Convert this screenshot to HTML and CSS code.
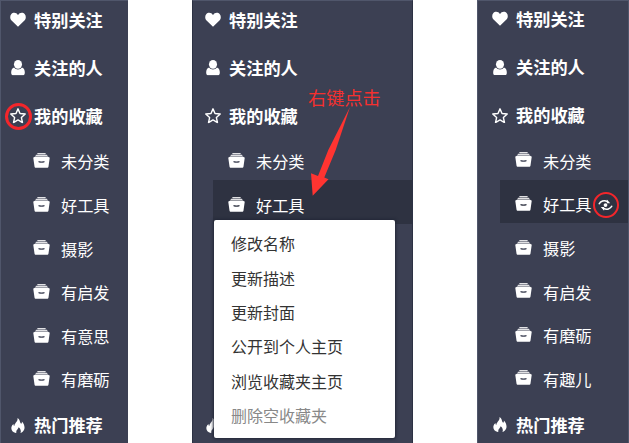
FILE: index.html
```html
<!DOCTYPE html>
<html lang="zh-CN">
<head>
<meta charset="utf-8">
<title>收藏夹</title>
<link rel="stylesheet" href="styles.css">
</head>
<body>
<svg class="defs" width="0" height="0" aria-hidden="true">
  <symbol id="heart" viewBox="0 0 16 15"><path d="M8 14.5 1.3 8C-.2 6.3-.1 3.500 1.200 2 3-.1 6.400.1 8 2.900 9.600.1 13-.1 14.800 2c1.300 1.500 1.400 4.300-.1 6z"/></symbol>
  <symbol id="user" viewBox="0 0 14 15"><ellipse cx="7" cy="4.200" rx="3.900" ry="4.200"/><path d="M3.200 7.300C1 8 .4 10 .4 12.300c0 1.600.8 2.500 2.200 2.500h8.800c1.400 0 2.200-.9 2.200-2.500 0-2.300-.6-4.300-2.800-5C9.200 9.800 4.800 9.800 3.200 7.300z"/></symbol>
  <symbol id="star" viewBox="0.700 0.700 14.600 14.600"><path d="m8 1.500 1.900 4.400 4.900.5-3.600 3.300 1 4.700L8 12l-4.200 2.400 1-4.700L1.200 6.400l4.900-.5z" fill="none" stroke="currentColor" stroke-width="1.350" stroke-linejoin="round"/></symbol>
  <symbol id="fire" viewBox="0 0 14 15"><path d="M6.500 0c3 2 1.700 4.200 3.700 5.500.6-.5.700-1.300.5-2.100 2.800 2.600 3.800 7.400.8 10-.7.600-1.500 1-2.200 1.200 1-2.100.2-4.200-1.700-5.700-.1 1.800-2.900 2.500-2.200 5.700C1.500 14 .1 11.400.7 8.800c.3-1.300 1-2.200 1.900-3 0 1 .2 1.700.8 2.200C3.300 4.600 7.200 3.800 6.500 0z"/></symbol>
  <symbol id="box" viewBox="0 0 17 15"><path d="M4.800.6h7.400M3.200 2.400h10.600" fill="none" stroke="currentColor" stroke-width="1.200" stroke-linecap="round" opacity=".85"/><path fill-rule="evenodd" d="M2.300 3.600h12.400L16 4.300c.6 0 .8.300.7.800l-1.200 8.300c-.1.900-.6 1.300-1.400 1.300H2.900c-.8 0-1.300-.4-1.400-1.300L.3 5.100c-.1-.5.1-.8.700-.8zM5.500 8v1.200c1.800.8 4.200.8 6 0V8c-1.800.6-4.200.6-6 0z"/></symbol>
  <symbol id="view" viewBox="0 0 16 12"><path d="M1 5.200C2.800 1.800 6.600.6 9.800 2.200M15 6.800c-1.800 3.400-5.600 4.600-8.800 3" fill="none" stroke="currentColor" stroke-width="1.700"/><path d="M9.500 0v4h3.500zM6.500 12V8H3z"/><circle cx="8" cy="6" r="2"/></symbol>
</svg>
<main class="shots">
  <nav class="panel panel-first">
    <div class="row"><svg class="icon"><use href="#heart"/></svg>特别关注</div>
    <div class="row"><svg class="icon"><use href="#user"/></svg>关注的人</div>
    <div class="row"><svg class="icon"><use href="#star"/></svg>我的收藏<span class="ring ring-star"></span></div>
    <div class="folders">
      <div class="folder"><svg class="box"><use href="#box"/></svg>未分类</div>
      <div class="folder"><svg class="box"><use href="#box"/></svg>好工具</div>
      <div class="folder"><svg class="box"><use href="#box"/></svg>摄影</div>
      <div class="folder"><svg class="box"><use href="#box"/></svg>有启发</div>
      <div class="folder"><svg class="box"><use href="#box"/></svg>有意思</div>
      <div class="folder"><svg class="box"><use href="#box"/></svg>有磨砺</div>
    </div>
    <div class="row"><svg class="icon"><use href="#fire"/></svg>热门推荐</div>
  </nav>
  <nav class="panel panel-second">
    <div class="row"><svg class="icon"><use href="#heart"/></svg>特别关注</div>
    <div class="row"><svg class="icon"><use href="#user"/></svg>关注的人</div>
    <div class="row"><svg class="icon"><use href="#star"/></svg>我的收藏</div>
    <div class="folders">
      <div class="folder"><svg class="box"><use href="#box"/></svg>未分类</div>
      <div class="folder active"><svg class="box"><use href="#box"/></svg>好工具
        <div class="menu">
          <div>修改名称</div>
          <div>更新描述</div>
          <div>更新封面</div>
          <div>公开到个人主页</div>
          <div>浏览收藏夹主页</div>
          <div class="disabled">删除空收藏夹</div>
        </div>
      </div>
      <div class="folder"></div>
      <div class="folder"></div>
      <div class="folder"></div>
      <div class="folder"></div>
    </div>
    <div class="row"><svg class="icon"><use href="#fire"/></svg></div>
    <span class="hint">右键点击</span>
    <svg class="arrow" viewBox="310 106 42 92"><path d="m350 107-14.300 43-11.400 27.500 4.200 1.800-15.800 16.500-1.700-22.500 7 2.700 10.300-26z"/></svg>
  </nav>
  <nav class="panel panel-third">
    <div class="row"><svg class="icon"><use href="#heart"/></svg>特别关注</div>
    <div class="row"><svg class="icon"><use href="#user"/></svg>关注的人</div>
    <div class="row"><svg class="icon"><use href="#star"/></svg>我的收藏</div>
    <div class="folders">
      <div class="folder"><svg class="box"><use href="#box"/></svg>未分类</div>
      <div class="folder active"><svg class="box"><use href="#box"/></svg>好工具<span class="ring ring-view"><svg class="view"><use href="#view"/></svg></span></div>
      <div class="folder"><svg class="box"><use href="#box"/></svg>摄影</div>
      <div class="folder"><svg class="box"><use href="#box"/></svg>有启发</div>
      <div class="folder"><svg class="box"><use href="#box"/></svg>有磨砺</div>
      <div class="folder"><svg class="box"><use href="#box"/></svg>有趣儿</div>
    </div>
    <div class="row"><svg class="icon"><use href="#fire"/></svg>热门推荐</div>
  </nav>
</main>
</body>
</html>
```
FILE: styles.css
```css
* { box-sizing: border-box; }

body {
  margin: 0;
  background: #fff;
  font-family: "Noto Sans CJK SC", sans-serif;
  overflow: hidden;
}

.defs { position: absolute; }

svg { fill: currentColor; flex: none; }

.shots {
  display: grid;
  grid-template-columns: 128px 221px 152px;
  justify-content: space-between;
  height: 443px;
}

.panel {
  position: relative;
  height: 443px;
  overflow: hidden;
  background: #3c4053;
  border: 1px solid #50566b;
  border-bottom: 0;
  color: #fff;
}

.panel-first { padding-left: 9px; border-right-width: 0; }
.panel-second { padding-left: 12px; border-color: #50566b #2c3143 #2c3143; }
.panel-third { padding-left: 14px; }

.row {
  position: relative;
  display: flex;
  align-items: center;
  gap: 8px;
  height: 48.200px;
  font-size: 17.200px;
  font-weight: 700;
  line-height: 24px;
  white-space: nowrap;
}

.row:first-child { margin-top: -5.300px; }
.panel-third > .row:first-child { margin-top: -6px; }

.icon { width: 16px; height: 15.500px; }

.folders {
  margin: -3.400px 0 2.900px 8px;
}

.folder {
  position: relative;
  display: flex;
  align-items: center;
  gap: 11px;
  height: 43.600px;
  padding: 5.500px 0 0 15px;
  font-size: 16.200px;
  line-height: 24px;
  white-space: nowrap;
}

.box { width: 17px; height: 15px; margin-top: -1.500px; }

.active { background: #2e3241; }

.ring {
  position: absolute;
  display: flex;
  align-items: center;
  justify-content: center;
  border: 2px solid #f3262b;
  border-radius: 50%;
}

.ring-star { left: -5px; top: 11px; width: 27px; height: 27px; border-width: 3px; }
.ring-view { left: 92.500px; top: 12px; width: 26px; height: 26px; }
.view { width: 15px; height: 12px; }

.menu {
  position: absolute;
  z-index: 1;
  left: 1px;
  top: 39.800px;
  width: 181px;
  height: 218px;
  padding: 6px 17px;
  background: #fff;
  border-radius: 2px;
  box-shadow: 0 0 3px 1px #222737;
  color: #333;
  font-size: 16px;
  line-height: 34.400px;
}

.disabled { color: #888; }

.hint {
  position: absolute;
  left: 115px;
  top: 83px;
  color: #f5302f;
  font-size: 18.200px;
  font-weight: 400;
  line-height: 26px;
}

.arrow {
  position: absolute;
  left: 117px;
  top: 105px;
  width: 42px;
  height: 92px;
  color: #ff3431;
}
```
